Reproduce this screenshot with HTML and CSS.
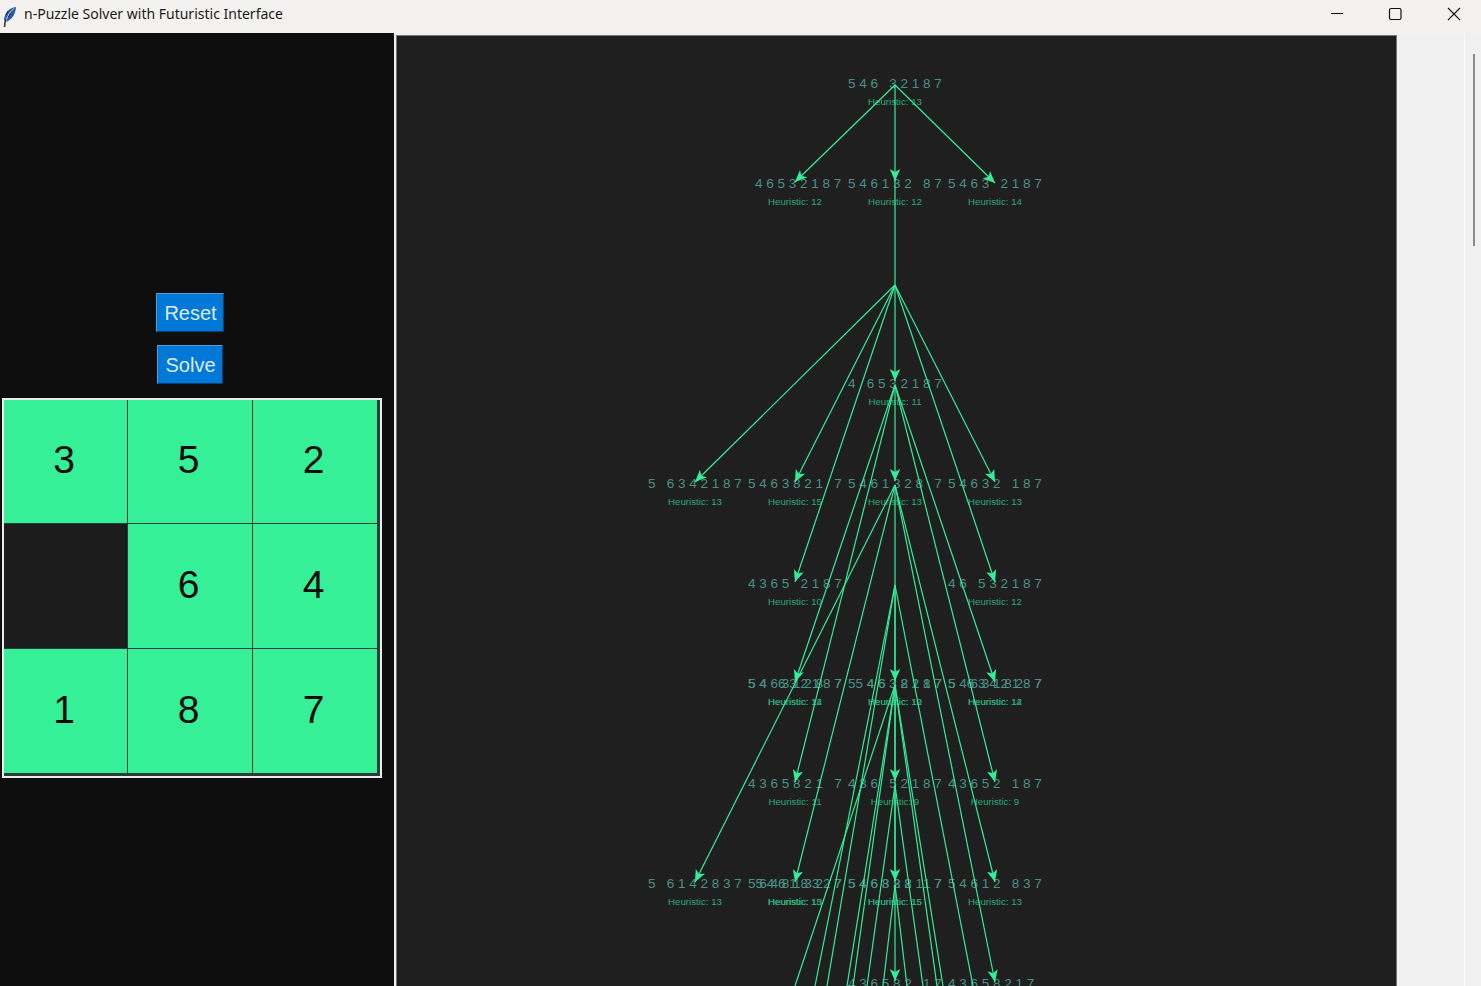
FILE: index.html
```html
<!DOCTYPE html>
<html lang="en">
<head>
    <meta charset="UTF-8">
    <title>n-Puzzle Solver with Futuristic Interface</title>
    <link rel="stylesheet" href="styles.css">
</head>
<body>
    <header class="titlebar">
        <svg class="app-icon" width="16" height="22" viewBox="0 0 16 22">
            <path d="M15 1 C8.5 1.5 4 6.5 3 13 L4.5 16 C10.5 14.5 14.5 8.5 15 1 Z" fill="#2c5c9c"/>
            <path d="M13 2.5 C9.5 5 6.5 9 5 15" stroke="#c4d2e4" stroke-width="1" fill="none"/>
            <path d="M7 5 L5 9 M10 8 L7 11" stroke="#16335e" stroke-width="1" fill="none"/>
            <path d="M4.5 13 L3.5 21" stroke="#3c3c3c" stroke-width="1.6" fill="none"/>
        </svg>
        <span class="title">n-Puzzle Solver with Futuristic Interface</span>
        <div class="window-buttons">
            <svg width="46" height="33" viewBox="0 0 46 33"><path d="M17 13.5 H29" stroke="#111" stroke-width="1.1" fill="none"/></svg>
            <svg width="46" height="33" viewBox="0 0 46 33"><rect x="16.5" y="8.5" width="11.5" height="11" rx="1.5" stroke="#111" stroke-width="1.2" fill="none"/></svg>
            <svg width="46" height="33" viewBox="0 0 46 33"><path d="M16 8 L28 20 M28 8 L16 20" stroke="#111" stroke-width="1.1" fill="none"/></svg>
        </div>
    </header>

    <main class="app">
        <section class="controls">
            <button class="btn btn-reset">Reset</button>
            <button class="btn btn-solve">Solve</button>
            <div class="board">
                <div class="tile">3</div>
                <div class="tile">5</div>
                <div class="tile">2</div>
                <div class="tile tile-blank"></div>
                <div class="tile">6</div>
                <div class="tile">4</div>
                <div class="tile">1</div>
                <div class="tile">8</div>
                <div class="tile">7</div>
            </div>
        </section>

        <section class="tree-area">
            <div class="tree-canvas">
                <svg class="tree" width="999" height="950" viewBox="397 36 999 950">
                    <defs>
                        <marker id="head" markerUnits="userSpaceOnUse" markerWidth="13" markerHeight="12" refX="12" refY="6" orient="auto">
                            <path d="M12 6 L0 0.8 L3 6 L0 11.2 Z" fill="#33ee99"/>
                        </marker>
                    </defs>

                    <!-- puzzle states -->
                    <text class="state" x="848" y="88">5 4 6   3 2 1 8 7</text>
                    <text class="state" x="755" y="188">4 6 5 3 2 1 8 7</text>
                    <text class="state" x="848" y="188">5 4 6 1 3 2   8 7</text>
                    <text class="state" x="948" y="188">5 4 6 3   2 1 8 7</text>
                    <text class="state" x="848" y="388">4   6 5 3 2 1 8 7</text>
                    <text class="state" x="648" y="488">5   6 3 4 2 1 8 7</text>
                    <text class="state" x="748" y="488">5 4 6 3 8 2 1   7</text>
                    <text class="state" x="848" y="488">5 4 6 1 3 2 8   7</text>
                    <text class="state" x="948" y="488">5 4 6 3 2   1 8 7</text>
                    <text class="state" x="748" y="588">4 3 6 5   2 1 8 7</text>
                    <text class="state" x="948" y="588">4 6   5 3 2 1 8 7</text>
                    <text class="state" x="748" y="688">5 4 6 3 1 2 8   7</text>
                    <text class="state" x="748" y="688">5 4   6 3 2 1 8 7</text>
                    <text class="state" x="848" y="688">5   4 6 3 8 2 1 7</text>
                    <text class="state" x="848" y="688">  5 4 6 3 2 1 8 7</text>
                    <text class="state" x="948" y="688">5   6 3 4 2 1 8 7</text>
                    <text class="state" x="948" y="688">5 4 6 3 1 8 2   7</text>
                    <text class="state" x="748" y="788">4 3 6 5 8 2 1   7</text>
                    <text class="state" x="848" y="788">4 3 6   5 2 1 8 7</text>
                    <text class="state" x="948" y="788">4 3 6 5 2   1 8 7</text>
                    <text class="state" x="648" y="888">5   6 1 4 2 8 3 7</text>
                    <text class="state" x="748" y="888">5 6 4 8 1 3 2   7</text>
                    <text class="state" x="748" y="888">  5 4 6 1 8 3 2 7</text>
                    <text class="state" x="848" y="888">5 4 6 3 2 8   1 7</text>
                    <text class="state" x="848" y="888">5 4 6 8 3 2 1   7</text>
                    <text class="state" x="948" y="888">5 4 6 1 2   8 3 7</text>
                    <text class="state" x="848" y="988">4 3 6 5 8 2   1 7</text>
                    <text class="state" x="948" y="988">4 3 6 5 8 2 1 7</text>

                    <!-- heuristic values -->
                    <text class="score" x="895" y="105">Heuristic: 13</text>
                    <text class="score" x="795" y="205">Heuristic: 12</text>
                    <text class="score" x="895" y="205">Heuristic: 12</text>
                    <text class="score" x="995" y="205">Heuristic: 14</text>
                    <text class="score" x="895" y="405">Heuristic: 11</text>
                    <text class="score" x="695" y="505">Heuristic: 13</text>
                    <text class="score" x="795" y="505">Heuristic: 15</text>
                    <text class="score" x="895" y="505">Heuristic: 13</text>
                    <text class="score" x="995" y="505">Heuristic: 13</text>
                    <text class="score" x="795" y="605">Heuristic: 10</text>
                    <text class="score" x="995" y="605">Heuristic: 12</text>
                    <text class="score" x="795" y="705">Heuristic: 12</text>
                    <text class="score" x="795" y="705">Heuristic: 14</text>
                    <text class="score" x="895" y="705">Heuristic: 10</text>
                    <text class="score" x="895" y="705">Heuristic: 12</text>
                    <text class="score" x="995" y="705">Heuristic: 12</text>
                    <text class="score" x="995" y="705">Heuristic: 14</text>
                    <text class="score" x="795" y="805">Heuristic: 11</text>
                    <text class="score" x="895" y="805">Heuristic: 9</text>
                    <text class="score" x="995" y="805">Heuristic: 9</text>
                    <text class="score" x="695" y="905">Heuristic: 13</text>
                    <text class="score" x="795" y="905">Heuristic: 13</text>
                    <text class="score" x="795" y="905">Heuristic: 15</text>
                    <text class="score" x="795" y="905">Heuristic: 13</text>
                    <text class="score" x="895" y="905">Heuristic: 15</text>
                    <text class="score" x="895" y="905">Heuristic: 15</text>
                    <text class="score" x="995" y="905">Heuristic: 13</text>

                    <!-- edges -->
                    <g class="edges">
                        <line x1="895" y1="85" x2="795" y2="182"/>
                        <line x1="895" y1="85" x2="895" y2="181"/>
                        <line x1="895" y1="85" x2="995" y2="183"/>
                        <line class="plain" x1="895" y1="180" x2="895" y2="285"/>

                        <line x1="895" y1="285" x2="695" y2="482"/>
                        <line x1="895" y1="285" x2="795" y2="482"/>
                        <line x1="895" y1="285" x2="795" y2="582"/>
                        <line x1="895" y1="285" x2="895" y2="381"/>
                        <line x1="895" y1="285" x2="995" y2="482"/>
                        <line x1="895" y1="285" x2="995" y2="582"/>

                        <line x1="895" y1="385" x2="795" y2="682"/>
                        <line x1="895" y1="385" x2="795" y2="782"/>
                        <line x1="895" y1="385" x2="895" y2="481"/>
                        <line x1="895" y1="385" x2="995" y2="682"/>
                        <line x1="895" y1="385" x2="995" y2="782"/>

                        <line x1="895" y1="485" x2="695" y2="882"/>
                        <line x1="895" y1="485" x2="795" y2="882"/>
                        <line x1="895" y1="485" x2="895" y2="681"/>
                        <line x1="895" y1="485" x2="995" y2="882"/>
                        <line x1="895" y1="485" x2="995" y2="982"/>

                        <line class="plain" x1="895" y1="585" x2="815" y2="986"/>
                        <line class="plain" x1="895" y1="585" x2="827" y2="986"/>
                        <line x1="895" y1="585" x2="895" y2="781"/>
                        <line class="plain" x1="895" y1="585" x2="973" y2="986"/>

                        <line class="plain" x1="895" y1="685" x2="795" y2="986"/>
                        <line class="plain" x1="895" y1="685" x2="847" y2="986"/>
                        <line class="plain" x1="895" y1="685" x2="853" y2="986"/>
                        <line x1="895" y1="685" x2="895" y2="881"/>
                        <line class="plain" x1="895" y1="685" x2="937" y2="986"/>
                        <line class="plain" x1="895" y1="685" x2="943" y2="986"/>

                        <line class="plain" x1="895" y1="785" x2="867" y2="986"/>
                        <line x1="895" y1="785" x2="895" y2="981"/>
                        <line class="plain" x1="895" y1="785" x2="923" y2="986"/>

                        <line class="plain" x1="895" y1="885" x2="883" y2="986"/>
                        <line class="plain" x1="895" y1="885" x2="907" y2="986"/>
                    </g>
                </svg>
            </div>
            <div class="scrollbar"><div class="scroll-thumb"></div></div>
        </section>
    </main>
</body>
</html>
```

FILE: styles.css
```css
html, body {
    height: 100%;
    margin: 0;
    overflow: hidden;
}

body {
    display: flex;
    flex-direction: column;
    background-color: #f0f0f0;
    font-family: "Liberation Sans", Arial, sans-serif;
}

/* Window title bar */
.titlebar {
    height: 33px;
    flex: none;
    display: flex;
    align-items: center;
    background-color: #f3f2f0;
    color: #1a1a1a;
}

.app-icon {
    margin-left: 1px;
    margin-right: 7px;
}

.title {
    font-family: "Noto Sans", sans-serif;
    font-size: 14px;
    padding-bottom: 7px;
}

.window-buttons {
    margin-left: auto;
    display: flex;
    gap: 13px;
    margin-right: 3px;
}

/* Main area */
.app {
    flex: 1;
    display: flex;
    min-height: 0;
}

.controls {
    width: 394px;
    flex: none;
    box-sizing: border-box;
    padding: 260px 12px 0 2px;
    display: flex;
    flex-direction: column;
    align-items: center;
    background-color: #0e0e0e;
}

.btn {
    height: 39px;
    margin-right: 5px;
    padding: 2px 0 0 2px;
    background-color: #0078d7;
    color: #dcebf8;
    font-family: "Liberation Sans", Arial, sans-serif;
    font-size: 20px;
    border: 1px solid;
    border-color: #4f9fe0 #00407a #00407a #4f9fe0;
}

.btn-reset {
    width: 68px;
}

.btn-solve {
    width: 66px;
    margin-top: 13px;
}

/* Puzzle board */
.board {
    margin-top: 14px;
    width: 380px;
    height: 380px;
    box-sizing: border-box;
    display: grid;
    grid-template-columns: 123px 124px 124px;
    grid-template-rows: 123px 124px 124px;
    gap: 1px;
    background-color: #2b3d38;
    border: 2px solid #ececec;
}

.tile {
    display: flex;
    justify-content: center;
    align-items: center;
    padding: 0 3px 3px 0;
    background-color: #36f098;
    color: #0c0c0c;
    font-size: 39px;
}

.tile-blank {
    background-color: #1c1c1c;
}

/* Search tree */
.tree-area {
    flex: 1;
    display: flex;
    margin-left: 2px;
    min-width: 0;
}

.tree-canvas {
    width: 1001px;
    height: 951px;
    margin-top: 2px;
    flex: none;
    background-color: #1f1f1f;
    border-top: 1px solid #777;
    border-left: 1px solid #777;
    border-right: 1px solid #777;
    box-sizing: border-box;
    overflow: hidden;
}

.tree {
    display: block;
}

.state {
    font-family: "Liberation Sans", Arial, sans-serif;
    font-size: 13.5px;
    fill: #4a9186;
    white-space: pre;
}

.score {
    font-family: "Liberation Sans", Arial, sans-serif;
    font-size: 9.7px;
    fill: #2ea87a;
    text-anchor: middle;
}

.edges line {
    stroke: #33ee99;
    stroke-width: 1.2;
    marker-end: url(#head);
}

.edges line.plain {
    marker-end: none;
}

.scrollbar {
    margin-left: auto;
    width: 17px;
    flex: none;
    box-sizing: border-box;
    border-left: 1px solid #fafafa;
    padding: 21px 6px 0 8px;
}

.scroll-thumb {
    height: 192px;
    background-color: #8c8c8c;
}
```
